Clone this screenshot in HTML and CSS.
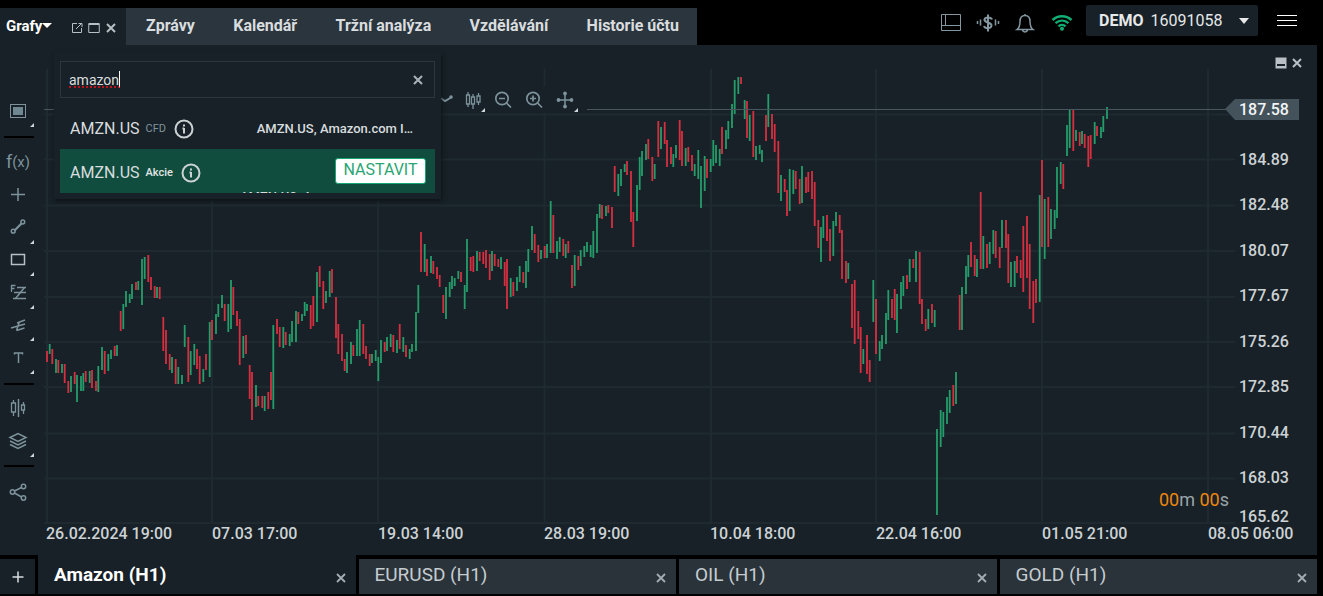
FILE: index.html
```html
<!DOCTYPE html>
<html lang="cs">
<head>
<meta charset="utf-8">
<title>Grafy – Amazon (H1)</title>
<link rel="stylesheet" href="styles.css">
</head>
<body>
<header class="topbar">
  <div class="charts-tab">
    <button class="charts-menu" type="button">Grafy<span class="caret"></span></button>
    <button class="icon-btn" type="button" aria-label="Otevřít v okně"><svg width="12" height="12" viewBox="0 0 12 12"><path d="M6 1.500H1.500v9h9V6M5 7l5.500-5.500M7.500 1.500h3.500v3.500"/></svg></button>
    <button class="icon-btn" type="button" aria-label="Maximalizovat"><svg width="12" height="12" viewBox="0 0 12 12"><path d="M.75 1.500h10.500v9H.750zM1 2.500h10"/></svg></button>
    <button class="icon-btn" type="button" aria-label="Zavřít grafy"><svg width="12" height="12" viewBox="0 0 12 12"><path stroke-width="2" d="M2 2l8 8M10 2l-8 8"/></svg></button>
  </div>
  <nav class="nav">
    <a href="#">Zprávy</a>
    <a href="#">Kalendář</a>
    <a href="#">Tržní analýza</a>
    <a href="#">Vzdělávání</a>
    <a href="#">Historie účtu</a>
  </nav>
  <div class="tools">
    <button class="tool" type="button" aria-label="Rozložení"><svg width="22" height="20" viewBox="0 0 22 20"><path d="M1.500 1.500h19v16h-19zM5.500 1.500v11M1.500 12.500h19"/></svg></button>
    <button class="tool" type="button" aria-label="Měna"><svg width="24" height="20" viewBox="0 0 24 20"><path stroke-width="2" d="M16 6.500C15 4 9 3.500 8.500 6.500 8.200 10 15.800 9 15.500 12.700 15 16 9 16 8 13M12 1.500v17"/><path stroke-width="1.500" d="M4.500 6.500v6M1.500 8v3M19.500 6.500v6M22.500 8v3"/></svg></button>
    <button class="tool" type="button" aria-label="Upozornění"><svg width="20" height="20" viewBox="0 0 20 20"><path stroke-width="1.500" d="M2 16.500c2-1.500 3-3 3-8 0-4 2-6 5-6s5 2 5 6c0 5 1 6.500 3 8zM10 1v1.500M7.500 17c.500 2.500 4.500 2.500 5 0"/></svg></button>
    <button class="tool wifi" type="button" aria-label="Připojení"><svg width="22" height="20" viewBox="0 0 22 20"><path stroke-width="2.400" d="M1.500 7c5.500-5 13.500-5 19 0M4.500 10.200c4-3.500 9-3.500 13 0M7.500 13.400c2-2 5-2 7 0"/><circle cx="11" cy="15.700" r="2" fill="currentColor" stroke="none"/></svg></button>
    <button class="account" type="button"><b>DEMO</b><span>16091058</span><span class="caret"></span></button>
    <button class="burger" type="button" aria-label="Nabídka"><i></i><i></i><i></i></button>
  </div>
</header>

<main class="workspace">
  <aside class="sidebar">
    <button class="side more first" type="button" aria-label="Režim grafu"><svg width="24" height="24" viewBox="0 0 24 24"><rect x="4.500" y="5.500" width="15" height="13"/><rect x="7" y="8" width="10" height="8" fill="#6f8790" stroke="none"/></svg></button>
    <div class="side-group drawing">
      <button class="side fx" type="button">f<small>(x)</small></button>
      <button class="side" type="button" aria-label="Kurzor"><svg width="24" height="24" viewBox="0 0 24 24"><path stroke-width="1.500" d="M12 5v13M5 11.500h14"/></svg></button>
      <button class="side more" type="button" aria-label="Čára"><svg width="24" height="24" viewBox="0 0 24 24"><path stroke-width="2.200" d="M8.500 15.500l7-7"/><circle cx="7.200" cy="16.200" r="1.900" stroke-width="1.500"/><circle cx="16.800" cy="7" r="1.900" stroke-width="1.500"/></svg></button>
      <button class="side more light" type="button" aria-label="Obdélník"><svg width="24" height="24" viewBox="0 0 24 24"><path stroke-width="1.500" d="M5.500 6.500h13v10h-13z"/></svg></button>
      <button class="side more" type="button" aria-label="Fibonacci"><svg width="24" height="24" viewBox="0 0 24 24"><path stroke-width="1.300" d="M5.500 11V4.500h4M5.500 7.500h3M11 6.500h9M8 11.500h12M7 17.500h13"/><path stroke-width="1.500" d="M18.500 6.500l-9 11"/></svg></button>
      <button class="side more" type="button" aria-label="Vidle"><svg width="24" height="24" viewBox="0 0 24 24"><path stroke-width="1.500" d="M5 15l14-4M11 10l8-3M10.500 17.500l8-2.500M10.500 17.500l3-9"/></svg></button>
      <button class="side more" type="button" aria-label="Text"><svg width="24" height="24" viewBox="0 0 24 24"><path stroke-width="1.500" d="M8.500 8.500V7h8v1.500M12.500 7v10"/></svg></button>
    </div>
    <div class="side-group indicators">
      <button class="side" type="button" aria-label="Porovnat"><svg width="24" height="24" viewBox="0 0 24 24"><path stroke-width="1.300" d="M7.500 4v3M7.500 16v4M5.500 7h4v9h-4zM17.500 6v3M17.500 14v4M15.500 9h3v5h-3z"/><path stroke-width="1.500" d="M12.500 3v18"/></svg></button>
      <button class="side more" type="button" aria-label="Vrstvy"><svg width="24" height="24" viewBox="0 0 24 24"><path stroke-width="1.500" d="M4 8.500l8-4 8 4-8 4zM4 12l8 4 8-4M4 15.500l8 4 8-4"/></svg></button>
    </div>
    <button class="side share" type="button" aria-label="Sdílet"><svg width="24" height="24" viewBox="0 0 24 24"><path stroke-width="1.500" d="M8.500 11l7-3.500M8.500 13l7 4"/><circle cx="6.500" cy="12" r="2.200" stroke-width="1.500"/><circle cx="17.500" cy="6.500" r="2.200" stroke-width="1.500"/><circle cx="17.500" cy="18" r="2.200" stroke-width="1.500"/></svg></button>
  </aside>

  <section class="plot">
    <svg class="chart" viewBox="44 45 1191 479" preserveAspectRatio="none" role="img" aria-label="Cenový graf AMZN.US">
      <path class="grid" d="M44 114.500H1235M44 159.500H1235M44 205.500H1235M44 251H1235M44 297H1235M44 342H1235M44 387H1235M44 433.500H1235M44 478.500H1235M44 523H1235M47 69V524M212 69V524M378 69V524M544.500 69V524M711 69V524M876 69V524M1042 69V524M1208 69V524"/>
      <path class="up" id="up"/>
      <path class="down" id="down"/>
      <path class="price-line" d="M44 109.500H1235"/>
    </svg>
    <div class="chart-tools">
      <button class="ct" type="button" aria-label="Typ čáry"><svg width="24" height="24" viewBox="0 0 24 24"><path stroke-width="2" d="M10 9l6 4 7-4"/><circle cx="22" cy="9" r="1.800" fill="currentColor" stroke="none"/></svg></button>
      <button class="ct more" type="button" aria-label="Svíčky"><svg width="24" height="24" viewBox="0 0 24 24"><path stroke-width="1.300" d="M8 4v3M8 16v3M6.500 7h3v9h-3zM13 6v3M13 16v5M11.500 9h3v7h-3zM18.500 5v3M18.500 14v3M17 8h3v6h-3z"/></svg></button>
      <button class="ct" type="button" aria-label="Oddálit"><svg width="24" height="24" viewBox="0 0 24 24"><g stroke-width="1.700"><circle cx="11" cy="10.500" r="6.200"/><path d="M15.500 15l4.500 4.500M8 10.500h6"/></g></svg></button>
      <button class="ct" type="button" aria-label="Přiblížit"><svg width="24" height="24" viewBox="0 0 24 24"><g stroke-width="1.700"><circle cx="11" cy="10.500" r="6.200"/><path d="M15.500 15l4.500 4.500M8 10.500h6M11 7.500v6"/></g></svg></button>
      <button class="ct more" type="button" aria-label="Posun"><svg width="24" height="24" viewBox="0 0 24 24"><path stroke-width="1.500" d="M12 5v14M5 12h14"/><g fill="currentColor" stroke="none"><circle cx="12" cy="5.500" r="1.900"/><circle cx="12" cy="18.500" r="1.900"/><circle cx="5.500" cy="12" r="1.900"/><circle cx="18.500" cy="12" r="1.900"/></g></svg></button>
    </div>
    <div class="countdown"><b>00</b>m <b>00</b>s</div>
  </section>

  <div class="price-axis">
    <div class="panel-buttons">
      <button class="panel-btn" type="button" aria-label="Minimalizovat"><svg width="12" height="12" viewBox="0 0 12 12"><path fill="#b9c1c6" stroke="none" d="M.500.500h11v11H.500z"/><path stroke="#172127" stroke-width="2" d="M2 8h8"/></svg></button>
      <button class="panel-btn" type="button" aria-label="Zavřít panel"><svg width="12" height="12" viewBox="0 0 12 12"><path stroke-width="2" d="M2 2l8 8M10 2l-8 8"/></svg></button>
    </div>
    <div class="price-tag">187.58</div>
    <div class="ticks"><span>184.89</span><span>182.48</span><span>180.07</span><span>177.67</span><span>175.26</span><span>172.85</span><span>170.44</span><span>168.03</span></div>
    <div class="last-tick">165.62</div>
  </div>

  <div class="time-axis"><span>26.02.2024 19:00</span><span>07.03 17:00</span><span>19.03 14:00</span><span>28.03 19:00</span><span>10.04 18:00</span><span>22.04 16:00</span><span>01.05 21:00</span><span>08.05 06:00</span></div>

  <div class="finder">
    <div class="search">
      <input type="text" value="amazon" aria-label="Hledat symbol" spellcheck="false">
      <span class="typo"></span>
      <button class="clear" type="button" aria-label="Vymazat"><svg width="12" height="12" viewBox="0 0 12 12"><path stroke-width="2" d="M2 2l8 8M10 2l-8 8"/></svg></button>
    </div>
    <ul class="results">
      <li class="result">
        <span class="symbol">AMZN.US</span><span class="kind">CFD</span>
        <button class="info" type="button" aria-label="Informace o AMZN.US CFD"><svg width="20" height="20" viewBox="0 0 20 20"><circle cx="10" cy="10" r="8.500"/><path d="M10 9v5.500M10 5.500v2M8.500 9.500H10"/></svg></button>
        <span class="name">AMZN.US, Amazon.com I…</span>
      </li>
      <li class="result selected">
        <span class="symbol">AMZN.US</span><span class="kind">Akcie</span>
        <button class="info" type="button" aria-label="Informace o AMZN.US Akcie"><svg width="20" height="20" viewBox="0 0 20 20"><circle cx="10" cy="10" r="8.500"/><path d="M10 9v5.500M10 5.500v2M8.500 9.500H10"/></svg></button>
        <button class="setup" type="button">NASTAVIT</button>
        <span class="name">AMZN.US, Amazon</span>
      </li>
    </ul>
  </div>
</main>

<footer class="sheets">
  <button class="add" type="button" aria-label="Přidat graf"><svg width="12" height="12" viewBox="0 0 12 12"><path stroke-width="1.500" d="M6 .500v11M.500 6h11"/></svg></button>
  <div class="sheet active"><a href="#">Amazon (H1)</a><button type="button" aria-label="Zavřít Amazon"><svg width="12" height="12" viewBox="0 0 12 12"><path stroke-width="1.800" d="M2 2l8 8M10 2l-8 8"/></svg></button></div>
  <div class="sheet"><a href="#">EURUSD (H1)</a><button type="button" aria-label="Zavřít EURUSD"><svg width="12" height="12" viewBox="0 0 12 12"><path stroke-width="1.800" d="M2 2l8 8M10 2l-8 8"/></svg></button></div>
  <div class="sheet"><a href="#">OIL (H1)</a><button type="button" aria-label="Zavřít OIL"><svg width="12" height="12" viewBox="0 0 12 12"><path stroke-width="1.800" d="M2 2l8 8M10 2l-8 8"/></svg></button></div>
  <div class="sheet"><a href="#">GOLD (H1)</a><button type="button" aria-label="Zavřít GOLD"><svg width="12" height="12" viewBox="0 0 12 12"><path stroke-width="1.800" d="M2 2l8 8M10 2l-8 8"/></svg></button></div>
</footer>
<script src="chart.js"></script>
</body>
</html>
```

FILE: styles.css
```css
* { box-sizing: border-box; }
body { margin: 0; min-height: 100vh; display: flex; flex-direction: column; background: #000; color: #d9dddf; font: 400 16px/20px Roboto, "Noto Sans", sans-serif; }
button { margin: 0; padding: 0; border: 0; background: none; color: inherit; font: inherit; cursor: pointer; }
a { color: inherit; text-decoration: none; }
svg { display: block; fill: none; stroke: currentColor; }
.caret { display: inline-block; border: 5px solid transparent; border-top-color: currentColor; border-bottom: 0; }

.topbar { display: flex; height: 45px; padding-right: 26px; }
.charts-tab { display: flex; align-items: center; gap: 5px; width: 126px; margin-top: 8px; padding: 0 0 2px 6px; background: #172127; }
.charts-menu { display: flex; align-items: center; margin-right: 14px; color: #fff; font-weight: 700; font-size: 15px; }
.icon-btn { padding-top: 4px; color: #b6bfc4; }
.nav { display: flex; align-items: center; justify-content: space-between; width: 571px; margin-top: 8px; padding: 0 18px 2px 20px; background: #2a353d; font-weight: 700; }
.tools { display: flex; align-items: flex-start; margin-left: auto; }
.tool { width: 22px; height: 20px; margin: 13px 15px 0 0; color: #8497a0; display: flex; justify-content: center; }
.tool svg { flex: none; }
.wifi { color: #0fae73; }
.account { display: flex; align-items: center; width: 172px; height: 31px; margin: 5px 19px 0 -2px; padding: 0 9px 0 13px; gap: 7px; background: #172127; border-radius: 2px; color: #e6e8e9; }
.account .caret { margin-left: auto; border-top-width: 6px; }
.burger { display: grid; gap: 4px; width: 20px; margin-top: 15px; }
.burger i { height: 1px; background: #fff; }

.workspace { position: relative; flex: 1; display: grid; grid-template-columns: 44px 1fr 82px; grid-template-rows: 1fr 31px; margin-right: 6px; background: #172127; }
.sidebar { grid-row: 1 / 3; color: #7d929b; }
.side { position: relative; display: flex; align-items: center; justify-content: center; width: 36px; }
.first { height: 32px; margin: 50px 0 9px; }
.light { color: #b5bfc4; }
.more::after { content: ""; position: absolute; right: 2px; bottom: 0; border: 2px solid transparent; border-right-color: #cfd5d8; border-bottom-color: #cfd5d8; }
.fx { font-size: 18px; }
.fx small { font-size: 15px; }
.side-group { display: grid; grid-auto-rows: 1fr; position: relative; }
.side-group::before, .share::before { content: ""; position: absolute; top: 0; left: 4px; width: 30px; height: 2px; background: #000; }
.drawing { height: 247px; padding: 10px 0 9px; }
.indicators { height: 82px; padding: 9px 0 8px; }
.share { height: 54px; }

.plot { position: relative; min-width: 0; }
.chart { position: absolute; width: 100%; height: 100%; }
.grid { stroke: #1f2a30; stroke-width: 2; }
.up { stroke: #249d6b; stroke-width: 1.8; }
.down { stroke: #d72f40; stroke-width: 1.8; }
.price-line { stroke: #47565f; }
.chart-tools { position: absolute; top: 41px; left: 10px; display: flex; justify-content: flex-end; gap: 7px; width: 533px; height: 27px; padding: 2px 10px 0 0; background: #172127; color: #7d929b; }
.ct { position: relative; width: 24px; height: 24px; }
.ct.more::after { right: -1px; bottom: 0; }
.countdown { position: absolute; right: 6px; bottom: 14px; color: #9aa5ab; font-size: 18px; }
.countdown b { color: #ef860f; font-weight: 400; }

.price-axis { grid-row: 1 / 3; grid-column: 3; display: flex; flex-direction: column; padding-bottom: 32px; color: #cdd2d5; font-weight: 500; }
.panel-buttons { display: flex; justify-content: flex-end; gap: 4px; height: 54px; padding: 12px 14px 0 0; color: #b9c1c6; }
.panel-btn { height: 12px; }
.price-tag { position: relative; width: 64px; padding-left: 4px; line-height: 21px; background: #43525b; color: #f2f4f5; }
.price-tag::before { content: ""; position: absolute; top: 0; left: -10px; border: solid transparent; border-width: 10px 10px 11px 0; border-right-color: #43525b; }
.ticks { flex: 1; display: grid; align-items: center; padding: 17px 0 10px 4px; }
.last-tick { padding-left: 4px; line-height: 12px; }
.time-axis { grid-column: 2 / 4; grid-row: 2; display: grid; grid-template-columns: repeat(7, minmax(0, 1fr)) 109px; padding-left: 2px; color: #cdd2d5; font-weight: 500; white-space: nowrap; pointer-events: none; }

.finder { position: absolute; top: 8px; left: 54px; width: 387px; padding: 8px 6px 6px; background: #172127; box-shadow: 1px 2px 4px #0d1418; }
.search { position: relative; display: flex; height: 37px; padding: 0 10px 0 8px; border: 1px solid #2b373e; }
.search input { flex: 1; min-width: 0; padding: 0; border: 0; outline: 0; background: none; color: #d9dddf; font: 400 14px/20px Roboto, sans-serif; }
.typo { position: absolute; top: 9px; left: 8px; width: 51px; height: 17px; border-right: 1px solid #fff; border-bottom: 2px dotted #c1121b; }
.clear { color: #a9b3b8; }
.results { margin: 9px 0 0; padding: 0; list-style: none; }
.result { display: flex; align-items: center; height: 42px; padding: 2px 22px 0 10px; }
.symbol { margin-right: 6px; }
.kind { margin-right: 8px; color: #82949c; font-size: 11px; }
.info { flex: none; width: 20px; color: #ccd2d4; }
.info svg { stroke-width: 2; }
.name { margin-left: auto; font-size: 13px; font-weight: 500; white-space: nowrap; }
.selected { flex-wrap: wrap; align-items: flex-start; align-content: flex-start; height: 44px; overflow: hidden; padding: 9px 9px 0 10px; background: #104d3e; }
.selected .symbol, .selected .kind { line-height: 29px; }
.selected .kind { color: #e0e5e3; font-weight: 500; }
.selected .info { margin-top: 5px; }
.selected .setup { width: 91px; height: 26px; margin-left: auto; border: 1px solid #16a673; border-radius: 3px; background: #fff; color: #2aa574; line-height: 22px; padding-bottom: 3px; }
.selected .name { width: 154px; margin: 0 32px 0 auto; }

.sheets { display: flex; gap: 3px; height: 41px; padding: 0 6px 2px 0; }
.add { display: grid; place-items: center; width: 35px; margin: 4px 0 0 0; background: #172127; color: #d9dddf; }
.sheet { flex: 1 1 0; display: flex; align-items: center; justify-content: space-between; margin-top: 4px; padding: 0 9px 0 16px; background: #2a333a; font-size: 19px; color: #c5ccd0; }
.sheet a { padding-bottom: 3px; }
.sheet button { padding-top: 2px; color: #a3adb2; }
.sheet.active { margin-top: 0; padding-top: 4px; background: #172127; color: #fff; font-weight: 700; }
```

FILE: chart.js
```js
// One bar per entry: direction (g = rising, r = falling), x, top, bottom.
const bars = `r47 351 362,g49.7 344 354,r52.3 349 364,g56 359 373,r58.3 360 373,g62 364 373,r64.7 364 383,r68.3 381 393,g71 376 392,r74.7 372 384,g77 375 402,g81 376 391,g83.3 373 391,r85.7 371 382,g89.7 371 383,r92 370 388,r96 381 391,g98.3 366 392,g102 347 370,r104.7 351 374,g108.3 354 371,g111 350 359,r114.7 346 356,g117 345 356,r120.7 311 331,g123.3 304 329,g126 291 307,g129.7 294 303,g132 284 299,r136 282 290,g138.3 281 290,g142 259 305,g144.7 257 279,r148.3 255 282,r151 277 290,r154.7 286 298,g157 287 298,r159.7 287 299,r163.3 317 351,r166 330 364,r169.7 354 370,g172 357 373,r175.7 359 384,g178.3 367 384,g182 375 384,g184.7 325 347,r188.3 337 382,g190.7 351 375,g194.3 344 365,r197 349 369,r199.7 356 384,g203.3 369 382,r206 354 370,g209.7 322 377,r212 320 340,g216 314 334,g218.3 304 317,g222 295 308,r224.7 304 321,g228.3 304 332,g231 280 329,r233.3 287 315,r237 311 326,r239.7 319 365,g243.3 336 358,r246 335 354,r249.7 365 399,r252 372 420,g256 385 407,r258.3 396 406,r262.3 396 408,g264.7 396 411,r268.3 392 409,r271 372 400,g273.3 325 409,
r277 319 334,r279.7 327 347,g283.3 327 348,r285.7 332 345,g289.7 334 346,g292 321 342,g296 311 342,r298.3 312 324,g302 314 321,g304.7 302 316,g307 304 311,r310.7 305 329,r313.3 296 326,g317 272 322,r319.7 266 287,r323.3 281 309,g326 291 303,g329.7 271 297,r332 269 293,r336 297 338,r338.3 324 354,r342 334 361,r344.7 359 371,g347 352 373,g351 342 364,r353.3 345 356,g357 329 356,g359.7 320 356,r363.3 324 354,r366 346 359,r369.7 354 366,g372 354 363,g375.7 350 361,g378.3 357 381,g381 340 363,r384.7 342 352,g387 337 351,g390.7 334 347,r393.3 335 352,g397 340 353,r399.7 324 349,g403.3 337 352,r406 345 357,g409.7 349 359,g412 344 352,g416 312 351,g418.3 285 313,r421 232 272,g424.7 244 272,r427 259 276,g431 256 273,r433.3 261 274,r437 267 279,r439.7 275 287,r443.3 295 313,g446 287 319,g449.7 282 297,g452 276 289,g454.7 278 286,g458.3 271 279,r461 272 282,g464.7 285 309,g467 239 292,r470.7 257 271,r473.3 256 272,g477 251 271,r479.7 252 261,r483.3 252 264,r486 250 268,
r489.7 254 280,g492 251 271,r494.7 254 266,r498.3 259 267,g501 257 269,r504.7 262 286,r507 259 309,g510.7 278 297,r513.3 282 296,g517 277 291,g519.7 266 282,r523.3 272 283,g526 261 288,g528.3 249 272,g532 226 250,r534.7 234 253,r538.3 245 262,g541 250 259,r544.7 246 258,g547 244 258,g550.7 201 253,r553.3 215 253,g557 241 259,g559.7 237 252,r563.3 239 256,g565.7 244 258,r568.3 241 253,r572 265 288,g574.7 255 286,r578.3 256 270,g580.7 250 266,g584.3 246 257,g587 242 252,g590.7 245 257,g593.3 231 258,g597 214 253,g599.7 204 218,r602 205 219,g606 206 216,r608.3 205 213,r612 207 228,r614.7 166 192,g618.3 174 196,g621 169 186,g624.7 164 172,r627 161 175,r631 171 222,r633.3 212 247,g637 185 221,g639.7 157 190,g642 151 176,g646 144 160,r648.3 139 159,r652.3 157 181,g654.7 164 179,r658.3 121 157,g661 127 149,r664.7 122 144,r667 140 167,r671 147 164,g673.3 154 167,g676 145 158,
r679.7 120 160,r682 131 166,g685.7 148 166,r688.3 147 162,r692 155 171,g694.7 164 176,g698.3 150 179,g701 166 208,g704.7 156 191,r707 159 178,g710.7 159 172,g713.3 140 166,g716 145 163,g719.7 149 166,r722 127 154,g726 130 149,g728.3 121 139,g732 104 128,g734.7 80 114,g738.3 77 94,r741 77 84,g744.7 100 119,r747 101 138,g749.7 115 141,r753.3 111 157,g756 146 160,g759.7 145 154,g762 150 162,r766 115 141,g768.3 94 127,r772 114 139,r774.7 124 152,r778.3 141 193,g781 175 201,r784.7 179 192,r787 190 216,g789.7 169 211,g793.3 170 194,r795.7 171 189,r799.7 179 204,g802 166 203,r806 177 193,r808.3 172 192,r812 171 199,r814.7 182 226,r818.3 220 248,g821 227 262,g823.3 216 238,r827 215 241,r830 229 261,g833.3 221 256,g836 212 226,r839.7 215 233,r842 230 279,
r846 261 283,g848.3 263 279,r852 284 328,r854.7 280 344,r858.3 311 339,r860.7 327 373,g863.3 349 364,r867 335 374,r869.7 360 382,g873.3 280 322,r876 299 354,g879.7 341 361,g882 335 349,g886 313 344,g888.3 290 320,r892 299 318,r894.7 289 320,g897 294 333,g901 282 309,g903.3 276 296,r907 275 289,g909.7 259 282,r913.3 259 268,g916 251 282,r919.7 252 304,r922 299 324,r925.7 319 331,g928.3 309 329,r932 304 323,g934.7 310 327,g937 429 515,g940.7 410 447,g943.3 412 437,g947 397 424,g949.7 390 413,r953.3 385 406,g956 372 404,
r959.7 295 330,g962 287 330,g966 266 294,g968.3 255 277,r971 242 267,r974.7 255 276,g977 259 277,r980.7 192 269,g983.3 236 269,r987 244 268,g989.7 242 264,g993.3 230 254,r995.7 231 258,r999.7 247 268,g1002 220 248,r1006 220 248,r1008.3 234 283,g1011 262 287,g1014.7 261 287,r1017 256 273,r1020.7 260 278,r1023.3 226 292,r1027 216 278,r1029.7 244 309,r1033.3 281 323,r1036 279 303,g1039.7 195 302,r1042 160 247,g1044.7 199 259,r1048.3 197 247,g1051 209 239,g1054.7 210 229,g1057 167 218,g1060.7 162 184,r1063.3 164 189,g1067 125 156,g1069.7 109 148,r1073.3 109 151,g1076 130 141,r1079.7 132 146,g1082 131 144,r1084.7 134 148,r1088.3 136 167,r1090.7 135 159,g1094.7 122 144,r1097 126 136,g1101 127 138,g1103.3 116 132,g1107 107 119`;

const paths = { g: "", r: "" };
for (const bar of bars.split(/,\s*/)) {
  const [x, top, bottom] = bar.slice(1).split(" ");
  paths[bar[0]] += `M${x} ${top}V${bottom}`;
}
document.getElementById("up").setAttribute("d", paths.g);
document.getElementById("down").setAttribute("d", paths.r);
```
